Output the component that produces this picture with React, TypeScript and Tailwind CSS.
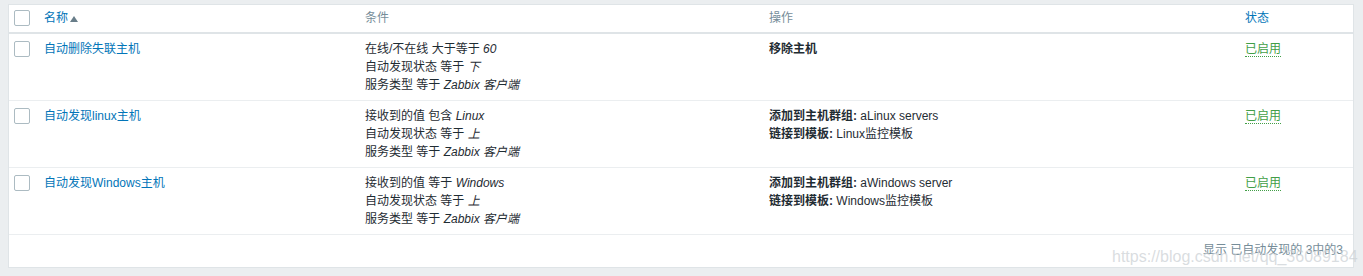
import React from "react";

const FONT = { fontFamily: '"Liberation Sans", Arial, "Noto Sans CJK SC", sans-serif' };

function Box() {
  return <div className="mt-[1px] h-[16px] w-[16px] rounded-[2px] border border-[#acbbc2] bg-white" />;
}

function Status() {
  return (
    <span className="border-b border-dotted border-[#429e47] text-[#429e47]">已启用</span>
  );
}

type Row = {
  name: string;
  cond: React.ReactNode[];
  ops: React.ReactNode[];
};

const rows: Row[] = [
  {
    name: "自动删除失联主机",
    cond: [
      <>在线/不在线 大于等于 <i>60</i></>,
      <>自动发现状态 等于 <i>下</i></>,
      <>服务类型 等于 <i>Zabbix 客户端</i></>,
    ],
    ops: [<b className="font-bold">移除主机</b>],
  },
  {
    name: "自动发现linux主机",
    cond: [
      <>接收到的值 包含 <i>Linux</i></>,
      <>自动发现状态 等于 <i>上</i></>,
      <>服务类型 等于 <i>Zabbix 客户端</i></>,
    ],
    ops: [
      <><b className="font-bold">添加到主机群组:</b> aLinux servers</>,
      <><b className="font-bold">链接到模板:</b> Linux监控模板</>,
    ],
  },
  {
    name: "自动发现Windows主机",
    cond: [
      <>接收到的值 等于 <i>Windows</i></>,
      <>自动发现状态 等于 <i>上</i></>,
      <>服务类型 等于 <i>Zabbix 客户端</i></>,
    ],
    ops: [
      <><b className="font-bold">添加到主机群组:</b> aWindows server</>,
      <><b className="font-bold">链接到模板:</b> Windows监控模板</>,
    ],
  },
];

const GRID = "grid grid-cols-[30px_321px_404px_476px_1fr]";

export default function App() {
  return (
    <div className="relative h-[276px] w-full overflow-hidden bg-[#ebeef0] pt-[4px] text-[12px] leading-[18px] text-[#1f2c33]" style={FONT}>
      <div className="ml-[8px] w-[1346px] border border-[#dfe4e7] bg-white">
        <div className={`${GRID} border-b-2 border-[#dfe4e7]`}>
          <div className="pl-[5px] pt-[4px] pb-[5px]"><Box /></div>
          <div className="flex items-center px-[5px] pt-[4px] pb-[5px] text-[#0275b8]">
            名称
            <span className="ml-[2px] mt-[1px] h-0 w-0 border-x-[4px] border-b-[6px] border-x-transparent border-b-[#687d89]" />
          </div>
          <div className="px-[5px] pt-[4px] pb-[5px] text-[#768d99]">条件</div>
          <div className="px-[5px] pt-[4px] pb-[5px] text-[#768d99]">操作</div>
          <div className="px-[5px] pt-[4px] pb-[5px] text-[#0275b8]">状态</div>
        </div>
        {rows.map((r, i) => (
          <div key={i} className={`${GRID} border-b border-[#ebeef0]`}>
            <div className="pl-[5px] pt-[6px] pb-[6px]"><Box /></div>
            <div className="px-[5px] pt-[6px] pb-[6px] text-[#0275b8]">{r.name}</div>
            <div className="flex flex-col px-[5px] pt-[6px] pb-[6px]">
              {r.cond.map((c, j) => (<div key={j}>{c}</div>))}
            </div>
            <div className="flex flex-col px-[5px] pt-[6px] pb-[6px]">
              {r.ops.map((c, j) => (<div key={j}>{c}</div>))}
            </div>
            <div className="px-[5px] pt-[6px] pb-[6px]"><Status /></div>
          </div>
        ))}
        <div className="pr-[10px] pt-[6px] pb-[8px] text-right text-[#768d99]">显示 已自动发现的 3中的3</div>
      </div>
      <div className="pointer-events-none absolute left-[1112px] top-[248px] whitespace-nowrap text-[16px] leading-[18px] text-[#c9ced2]/70">
        https://blog.csdn.net/qq_36089184
      </div>
    </div>
  );
}
